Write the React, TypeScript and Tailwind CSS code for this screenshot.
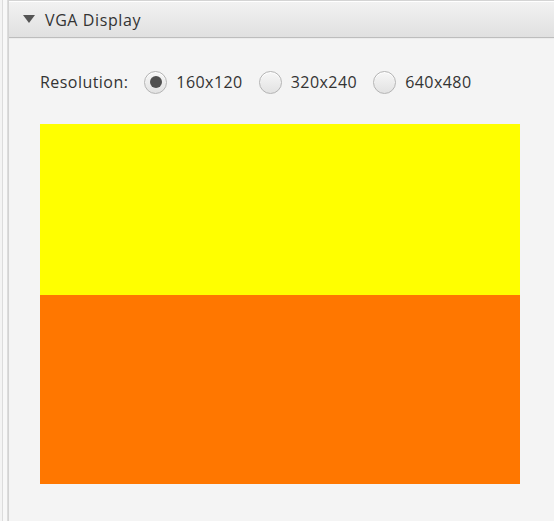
import React from "react";

function Radio({ checked, label }: { checked?: boolean; label: string }) {
  return (
    <div className="flex items-center gap-[9px]">
      <div className="w-[23px] h-[23px] rounded-full border border-[#b4b4b4] bg-[linear-gradient(to_bottom,#f7f7f7,#e2e2e2)] shadow-[inset_0_1px_0_#ffffff] flex items-center justify-center">
        {checked && <div className="w-[12px] h-[12px] rounded-full bg-[#505050]" />}
      </div>
      <span>{label}</span>
    </div>
  );
}

export default function App() {
  return (
    <div
      className="w-[554px] h-[521px] bg-[#f4f4f4] flex overflow-hidden text-[#333333]"
      style={{ fontFamily: '"Segoe UI", "Open Sans", "Noto Sans", sans-serif' }}
    >
      <div className="w-[9px] shrink-0 flex">
        <div className="w-[2px] bg-[#f4f4f4]" />
        <div className="w-[1px] bg-[#dcdcdc]" />
        <div className="w-[4px] bg-[#f8f8f8]" />
        <div className="w-[2px] bg-[linear-gradient(to_right,#e0e0e0,#cfcfcf)]" />
      </div>
      <div className="flex-1 flex flex-col min-w-0">
        <div className="h-[38px] shrink-0 border-t border-[#d4d4d4] border-b border-b-[#bdbdbd] bg-[linear-gradient(to_bottom,#f2f2f2,#e0e0e0)] shadow-[inset_0_1px_0_#ffffff] flex items-center">
          <svg width="12" height="10" viewBox="0 0 12 10" className="ml-[14px] mr-[10px]">
            <polygon points="0,1 12,1 6,9" fill="#555555" />
          </svg>
          <span className="text-[16px] leading-none tracking-[0.6px] pt-[1px]">VGA Display</span>
        </div>
        <div className="h-[1px] bg-[#ececec]" />
        <div className="pl-[31px] pt-[28px]">
          <div className="flex items-center text-[16px] h-[30px] tracking-[0.45px]">
            <span className="mr-[16px]">Resolution:</span>
            <div className="flex items-center gap-[16px]">
              <Radio checked label="160x120" />
              <Radio label="320x240" />
              <Radio label="640x480" />
            </div>
          </div>
          <div className="mt-[27px] w-[480px] flex flex-col">
            <div className="h-[171px] bg-[#ffff00]" />
            <div className="h-[189px] bg-[#ff7700]" />
          </div>
        </div>
      </div>
    </div>
  );
}
